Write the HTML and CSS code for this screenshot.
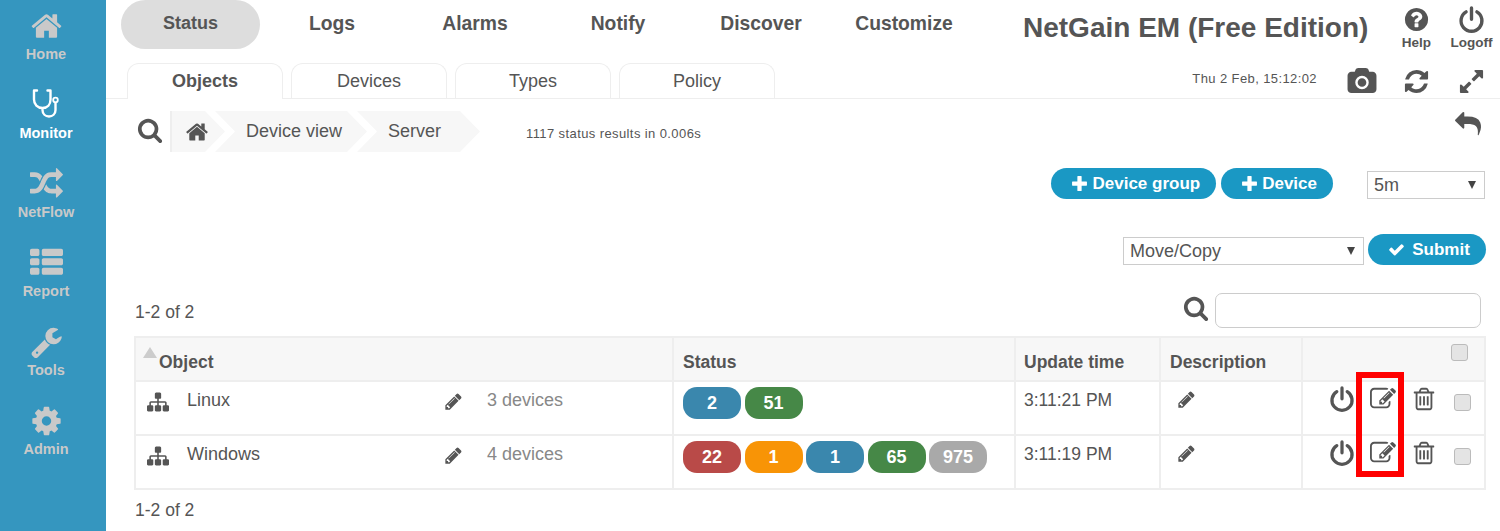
FILE: index.html
```html
<!DOCTYPE html>
<html lang="en">
<head>
    <meta charset="UTF-8">
    <meta name="viewport" content="width=device-width, initial-scale=1.0">
    <title>NetGain EM (Free Edition)</title>
    <link rel="stylesheet" href="styles.css">
</head>
<body>

<svg class="icon-defs" xmlns="http://www.w3.org/2000/svg">
    <symbol id="i-home" viewBox="0 0 1792 1792"><path d="M1472 992v480q0 26-19 45t-45 19h-384v-384h-256v384h-384q-26 0-45-19t-19-45v-480q0-1 .5-3t.5-3l575-474 575 474q1 2 1 6zm223-69l-62 74q-8 9-21 11h-3q-13 0-21-7l-692-577-692 577q-12 8-24 7-13-2-21-11l-62-74q-8-10-7-23.500t11-21.500l719-599q32-26 76-26t76 26l244 204v-195q0-14 9-23t23-9h192q14 0 23 9t9 23v408l219 182q10 8 11 21.500t-7 23.500z"/></symbol>
    <symbol id="i-search" viewBox="0 0 1792 1792"><path d="M1216 832q0-185-131.500-316.500t-316.500-131.500-316.500 131.500-131.500 316.500 131.500 316.500 316.500 131.500 316.500-131.500 131.500-316.500zm512 832q0 52-38 90t-90 38q-54 0-90-38l-343-342q-179 124-399 124-143 0-273.500-55.500t-225-150-150-225-55.500-273.500 55.500-273.500 150-225 225-150 273.500-55.500 273.500 55.500 225 150 150 225 55.500 273.500q0 220-124 399l343 343q37 37 37 90z"/></symbol>
    <symbol id="i-pencil" viewBox="0 0 1792 1792"><path d="M491 1536l91-91-235-235-91 91v107h128v128h107zm523-928q0-22-22-22-10 0-17 7l-542 542q-7 7-7 17 0 22 22 22 10 0 17-7l542-542q7-7 7-17zm-54-192l416 416-832 832h-416v-416zm683 96q0 53-37 90l-166 166-416-416 166-165q36-38 90-38 53 0 91 38l235 234q37 39 37 91z"/></symbol>
    <symbol id="i-check" viewBox="0 0 1792 1792"><path d="M1671 566q0 40-28 68l-724 724-136 136q-28 28-68 28t-68-28l-136-136-362-362q-28-28-28-68t28-68l136-136q28-28 68-28t68 28l294 295 656-657q28-28 68-28t68 28l136 136q28 28 28 68z"/></symbol>
    <symbol id="i-plus" viewBox="0 0 16 16"><path d="M6 1.500q0-.5.5-.5h3q.5 0 .5.500V6h4.500q.5 0 .5.500v3q0 .5-.5.500H10v4.500q0 .5-.5.500h-3q-.5 0-.5-.500V10H1.500q-.5 0-.5-.500v-3q0-.5.5-.500H6z"/></symbol>
    <symbol id="i-random" viewBox="0 0 1792 1792"><path d="M666 481q-60 92-137 273-22-45-37-72.500t-40.500-63.500-51-56.500-63-35-81.500-14.500h-224q-14 0-23-9t-9-23v-192q0-14 9-23t23-9h224q250 0 410 225zm1126 799q0 14-9 23l-320 320q-9 9-23 9-13 0-22.500-9.500t-9.500-22.500v-192q-32 0-85 .5t-81 1-73-1-71-5-64-10.500-63-18.500-58-28.500-59-40-55-53.500-56-69q59-93 136-273 22 45 37 72.500t40.500 63.500 51 56.500 63 35 81.500 14.500h256v-192q0-14 9-23t23-9q12 0 24 10l319 319q9 9 9 23zm0-896q0 14-9 23l-320 320q-9 9-23 9-13 0-22.500-9.500t-9.500-22.500v-192h-256q-48 0-87 15t-69 45-51 61.500-45 77.500q-32 62-78 171-29 66-49.500 111t-54 105-64 100-74 83-90 68.500-106.500 42-128 16.500h-224q-14 0-23-9t-9-23v-192q0-14 9-23t23-9h224q48 0 87-15t69-45 51-61.500 45-77.500q32-62 78-171 29-66 49.500-111t54-105 64-100 74-83 90-68.500 106.500-42 128-16.500h256v-192q0-14 9-23t23-9q12 0 24 10l319 319q9 9 9 23z"/></symbol>
    <symbol id="i-list" viewBox="0 0 1792 1792"><path d="M512 1248v192q0 40-28 68t-68 28h-320q-40 0-68-28t-28-68v-192q0-40 28-68t68-28h320q40 0 68 28t28 68zm0-512v192q0 40-28 68t-68 28h-320q-40 0-68-28t-28-68v-192q0-40 28-68t68-28h320q40 0 68 28t28 68zm1280 512v192q0 40-28 68t-68 28h-960q-40 0-68-28t-28-68v-192q0-40 28-68t68-28h960q40 0 68 28t28 68zm-1280-1024v192q0 40-28 68t-68 28h-320q-40 0-68-28t-28-68v-192q0-40 28-68t68-28h320q40 0 68 28t28 68zm1280 512v192q0 40-28 68t-68 28h-960q-40 0-68-28t-28-68v-192q0-40 28-68t68-28h960q40 0 68 28t28 68zm0-512v192q0 40-28 68t-68 28h-960q-40 0-68-28t-28-68v-192q0-40 28-68t68-28h960q40 0 68 28t28 68z"/></symbol>
    <symbol id="i-wrench" viewBox="0 0 1792 1792"><path d="M448 1472q0-26-19-45t-45-19-45 19-19 45 19 45 45 19 45-19 19-45zm644-420l-682 682q-37 37-90 37-52 0-91-37l-106-108q-38-36-38-90 0-53 38-91l681-681q39 98 114.500 173.500t173.500 114.500zm634-435q0 39-23 106-47 134-164.500 217.500t-258.500 83.500q-185 0-316.500-131.500t-131.500-316.500 131.500-316.500 316.500-131.500q58 0 121.500 16.500t107.500 46.500q16 11 16 28t-16 28l-293 169v224l193 107q5-3 79-48.500t135.500-81 70.500-35.500q15 0 23.500 10t8.500 25z"/></symbol>
    <symbol id="i-cog" viewBox="0 0 1792 1792"><path d="M1152 896q0-106-75-181t-181-75-181 75-75 181 75 181 181 75 181-75 75-181zm512-109v222q0 12-8 23t-20 13l-185 28q-19 54-39 91 35 50 107 138 10 12 10 25t-9 23q-27 37-99 108t-94 71q-12 0-26-9l-138-108q-44 23-91 38-16 136-29 186-7 28-36 28h-222q-14 0-24.500-8.500t-11.500-21.500l-28-184q-49-16-90-37l-141 107q-10 9-25 9-14 0-25-11-126-114-165-168-7-10-7-23 0-12 8-23 15-21 51-66.500t54-70.500q-27-50-41-99l-183-27q-13-2-21-12.500t-8-23.500v-222q0-12 8-23t19-13l186-28q14-46 39-92-40-57-107-138-10-12-10-24 0-10 9-23 26-36 98.500-107.500t94.500-71.500q13 0 26 10l138 107q44-23 91-38 16-136 29-186 7-28 36-28h222q14 0 24.500 8.500t11.500 21.500l28 184q49 16 90 37l142-107q9-9 24-9 13 0 25 10 129 119 165 170 7 8 7 22 0 12-8 23-15 21-51 66.500t-54 70.500q26 50 41 98l183 28q13 2 21 12.500t8 23.500z"/></symbol>
    <symbol id="i-help" viewBox="0 0 1792 1792"><path d="M1024 1376v-192q0-14-9-23t-23-9h-192q-14 0-23 9t-9 23v192q0 14 9 23t23 9h192q14 0 23-9t9-23zm256-672q0-88-55.500-163t-138.500-116-170-41q-243 0-371 213-15 24 8 42l132 100q7 6 19 6 16 0 25-12 53-68 86-92 34-24 86-24 48 0 85.500 26t37.500 59q0 38-20 61t-68 45q-63 28-115.500 86.500t-52.500 125.500v36q0 14 9 23t23 9h192q14 0 23-9t9-23q0-19 21.500-49.500t54.500-49.500q32-18 49-28.500t46-35 44.500-48 28-60.500 12.500-81zm384 192q0 209-103 385.500t-279.500 279.500-385.500 103-385.500-103-279.500-279.500-103-385.500 103-385.500 279.500-279.500 385.500-103 385.500 103 279.500 279.500 103 385.500z"/></symbol>
    <symbol id="i-camera" viewBox="0 0 1792 1792"><path d="M896 672q119 0 203.500 84.500t84.500 203.500-84.500 203.500-203.500 84.500-203.500-84.500-84.500-203.500 84.500-203.500 203.500-84.500zm704-416q106 0 181 75t75 181v896q0 106-75 181t-181 75h-1408q-106 0-181-75t-75-181v-896q0-106 75-181t181-75h224l51-136q19-49 69.500-84.500t103.500-35.500h512q53 0 103.500 35.500t69.500 84.500l51 136h224zm-704 1152q185 0 316.500-131.500t131.500-316.500-131.500-316.500-316.500-131.500-316.500 131.500-131.500 316.500 131.500 316.500 316.500 131.500z"/></symbol>
    <symbol id="i-refresh" viewBox="0 0 1792 1792"><path d="M1639 1056q0 5-1 7-64 268-268 434.500t-478 166.500q-146 0-282.500-55t-243.500-157l-129 129q-19 19-45 19t-45-19-19-45v-448q0-26 19-45t45-19h448q26 0 45 19t19 45-19 45l-137 137q71 66 161 102t187 36q134 0 250-65t186-179q11-17 53-117 8-23 30-23h192q13 0 22.500 9.500t9.500 22.500zm25-800v448q0 26-19 45t-45 19h-448q-26 0-45-19t-19-45 19-45l138-138q-148-137-349-137-134 0-250 65t-186 179q-11 17-53 117-8 23-30 23h-199q-13 0-22.500-9.500t-9.500-22.500v-7q65-268 270-434.500t480-166.500q146 0 284 55.500t245 156.500l130-129q19-19 45-19t45 19 19 45z"/></symbol>
    <symbol id="i-expand" viewBox="0 0 1792 1792"><path d="M883 1056q0 13-10 23l-332 332 144 144q19 19 19 45t-19 45-45 19h-448q-26 0-45-19t-19-45v-448q0-26 19-45t45-19 45 19l144 144 332-332q10-10 23-10t23 10l114 114q10 10 10 23zm781-864v448q0 26-19 45t-45 19-45-19l-144-144-332 332q-10 10-23 10t-23-10l-114-114q-10-10-10-23t10-23l332-332-144-144q-19-19-19-45t19-45 45-19h448q26 0 45 19t19 45z"/></symbol>
    <symbol id="i-reply" viewBox="0 0 1792 1792"><path d="M1792 1120q0 166-127 451-3 7-10.500 24t-13.500 30-13 22q-12 17-28 17-15 0-23.500-10t-8.500-25q0-9 2.500-26.500t2.500-23.500q5-68 5-123 0-101-17.500-181t-48.500-138.500-80-101-105.500-69.500-133-42.500-154-21.500-175.500-6h-224v256q0 26-19 45t-45 19-45-19l-512-512q-19-19-19-45t19-45l512-512q19-19 45-19t45 19 19 45v256h224q713 0 875 403 53 134 53 333z"/></symbol>
    <symbol id="i-sitemap" viewBox="0 0 1792 1792"><path d="M1792 1248v320q0 40-28 68t-68 28h-320q-40 0-68-28t-28-68v-320q0-40 28-68t68-28h96v-192h-512v192h96q40 0 68 28t28 68v320q0 40-28 68t-68 28h-320q-40 0-68-28t-28-68v-320q0-40 28-68t68-28h96v-192h-512v192h96q40 0 68 28t28 68v320q0 40-28 68t-68 28h-320q-40 0-68-28t-28-68v-320q0-40 28-68t68-28h96v-192q0-52 38-90t90-38h512v-192h-96q-40 0-68-28t-28-68v-320q0-40 28-68t68-28h320q40 0 68 28t28 68v320q0 40-28 68t-68 28h-96v192h512q52 0 90 38t38 90v192h96q40 0 68 28t28 68z"/></symbol>
    <symbol id="i-edit" viewBox="0 0 1792 1792"><path d="M888 1184l116-116-152-152-116 116v56h96v96h56zm440-720q-16-16-33 1l-350 350q-17 17-1 33t33-1l350-350q17-17 1-33zm80 594v190q0 119-84.500 203.500t-203.500 84.500h-832q-119 0-203.500-84.500t-84.500-203.500v-832q0-119 84.500-203.500t203.500-84.500h832q63 0 117 25 15 7 18 23 3 17-9 29l-49 49q-14 14-32 8-23-6-45-6h-832q-66 0-113 47t-47 113v832q0 66 47 113t113 47h832q66 0 113-47t47-113v-126q0-13 9-22l64-64q15-15 35-7t20 29zm-96-738l288 288-672 672h-288v-288zm444 132l-92 92-288-288 92-92q28-28 68-28t68 28l152 152q28 28 28 68t-28 68z"/></symbol>
    <symbol id="i-trash" viewBox="0 0 1792 1792"><path d="M704 736v576q0 14-9 23t-23 9h-64q-14 0-23-9t-9-23v-576q0-14 9-23t23-9h64q14 0 23 9t9 23zm256 0v576q0 14-9 23t-23 9h-64q-14 0-23-9t-9-23v-576q0-14 9-23t23-9h64q14 0 23 9t9 23zm256 0v576q0 14-9 23t-23 9h-64q-14 0-23-9t-9-23v-576q0-14 9-23t23-9h64q14 0 23 9t9 23zm128 724v-948h-896v948q0 22 7 40.500t14.500 27 10.500 8.500h832q3 0 10.500-8.500t14.500-27 7-40.500zm-672-1076h448l-48-117q-7-9-17-11h-317q-10 2-17 11zm928 32v64q0 14-9 23t-23 9h-96v948q0 83-47 143.500t-113 60.500h-832q-66 0-113-58.500t-47-141.500v-952h-96q-14 0-23-9t-9-23v-64q0-14 9-23t23-9h309l70-167q15-37 54-63t79-26h320q40 0 79 26t54 63l70 167h309q14 0 23 9t9 23z"/></symbol>
    <symbol id="i-power" viewBox="0 0 24 24"><path d="M7.200 5.200a9.300 9.300 0 1 0 9.600 0M12 1.800v10" fill="none" stroke="currentColor" stroke-width="3" stroke-linecap="round"/></symbol>
    <symbol id="i-steth" viewBox="0 0 33 36"><path d="M7 3.500H4v9c0 5 3.500 8.500 8.500 8.500s8-3.500 8-8.500v-9h-3M12.500 21v2c0 4 3 6.500 6.500 6.500s6.500-2.500 6.500-6.500v-7" fill="none" stroke="currentColor" stroke-width="2.400" stroke-linecap="round" stroke-linejoin="round"/><circle cx="25.500" cy="13" r="2.300" fill="none" stroke="currentColor" stroke-width="1.800"/></symbol>
</svg>

<div class="app">
    <nav class="sidebar">
        <a class="side-item"><svg class="side-icon"><use href="#i-home"/></svg>Home</a>
        <a class="side-item active"><svg class="side-icon"><use href="#i-steth"/></svg>Monitor</a>
        <a class="side-item"><svg class="side-icon"><use href="#i-random"/></svg>NetFlow</a>
        <a class="side-item"><svg class="side-icon"><use href="#i-list"/></svg>Report</a>
        <a class="side-item"><svg class="side-icon"><use href="#i-wrench"/></svg>Tools</a>
        <a class="side-item"><svg class="side-icon"><use href="#i-cog"/></svg>Admin</a>
    </nav>

    <div class="main">
        <header class="topbar">
            <div class="menu">
                <a class="menu-item selected">Status</a>
                <a class="menu-item">Logs</a>
                <a class="menu-item">Alarms</a>
                <a class="menu-item">Notify</a>
                <a class="menu-item">Discover</a>
                <a class="menu-item">Customize</a>
            </div>
            <h1 class="app-title">NetGain EM (Free Edition)</h1>
            <a class="top-link"><svg class="top-icon"><use href="#i-help"/></svg>Help</a>
            <a class="top-link"><svg class="top-icon"><use href="#i-power"/></svg>Logoff</a>
        </header>

        <div class="tabbar">
            <a class="tab selected">Objects</a>
            <a class="tab">Devices</a>
            <a class="tab">Types</a>
            <a class="tab">Policy</a>
            <span class="clock">Thu 2 Feb, 15:12:02</span>
            <span class="tool"><svg class="tool-icon camera"><use href="#i-camera"/></svg></span>
            <span class="tool"><svg class="tool-icon"><use href="#i-refresh"/></svg></span>
            <span class="tool"><svg class="tool-icon"><use href="#i-expand"/></svg></span>
        </div>

        <div class="content">
            <div class="crumb-row">
                <svg class="search-icon crumb-search"><use href="#i-search"/></svg>
                <div class="crumbs">
                    <a class="crumb crumb-home"><svg class="crumb-icon"><use href="#i-home"/></svg></a>
                    <a class="crumb crumb-view">Device view</a>
                    <a class="crumb crumb-server">Server</a>
                </div>
                <span class="result-info">1117 status results in 0.006s</span>
                <svg class="back-icon"><use href="#i-reply"/></svg>
            </div>

            <div class="action-row">
                <a class="button"><svg class="btn-icon"><use href="#i-plus"/></svg>Device group</a>
                <a class="button"><svg class="btn-icon"><use href="#i-plus"/></svg>Device</a>
                <div class="select-box select-time">
                    <select><option>5m</option></select>
                </div>
            </div>

            <div class="bulk-row">
                <div class="select-box select-bulk">
                    <select><option>Move/Copy</option></select>
                </div>
                <a class="button button-submit"><svg class="btn-icon"><use href="#i-check"/></svg>Submit</a>
            </div>

            <div class="filter-row">
                <span class="pager">1-2 of 2</span>
                <svg class="search-icon filter-search"><use href="#i-search"/></svg>
                <input class="filter-input" type="text">
            </div>

            <table class="status-table">
                <colgroup>
                    <col class="col-object">
                    <col class="col-status">
                    <col class="col-time">
                    <col class="col-desc">
                    <col class="col-actions">
                </colgroup>
                <thead>
                    <tr>
                        <th><div class="sort-head"><span class="sort-arrow"></span>Object</div></th>
                        <th>Status</th>
                        <th class="time-cell">Update time</th>
                        <th>Description</th>
                        <th class="head-check"><input class="check" type="checkbox"></th>
                    </tr>
                </thead>
                <tbody>
                    <tr>
                        <td>
                            <div class="object-cell">
                                <svg class="tree-icon"><use href="#i-sitemap"/></svg>
                                <span>Linux</span>
                                <svg class="pencil-icon"><use href="#i-pencil"/></svg>
                                <span class="device-count">3 devices</span>
                            </div>
                        </td>
                        <td>
                            <div class="badges">
                                <span class="badge blue">2</span>
                                <span class="badge green">51</span>
                            </div>
                        </td>
                        <td class="time-cell">3:11:21 PM</td>
                        <td><svg class="pencil-icon desc-pencil"><use href="#i-pencil"/></svg></td>
                        <td>
                            <div class="row-actions">
                                <svg class="act-icon"><use href="#i-power"/></svg>
                                <svg class="act-icon"><use href="#i-edit"/></svg>
                                <svg class="act-icon"><use href="#i-trash"/></svg>
                                <input class="check" type="checkbox">
                            </div>
                        </td>
                    </tr>
                    <tr>
                        <td>
                            <div class="object-cell">
                                <svg class="tree-icon"><use href="#i-sitemap"/></svg>
                                <span>Windows</span>
                                <svg class="pencil-icon"><use href="#i-pencil"/></svg>
                                <span class="device-count">4 devices</span>
                            </div>
                        </td>
                        <td>
                            <div class="badges">
                                <span class="badge red">22</span>
                                <span class="badge orange">1</span>
                                <span class="badge blue">1</span>
                                <span class="badge green">65</span>
                                <span class="badge grey">975</span>
                            </div>
                        </td>
                        <td class="time-cell">3:11:19 PM</td>
                        <td><svg class="pencil-icon desc-pencil"><use href="#i-pencil"/></svg></td>
                        <td>
                            <div class="row-actions">
                                <svg class="act-icon"><use href="#i-power"/></svg>
                                <svg class="act-icon"><use href="#i-edit"/></svg>
                                <svg class="act-icon"><use href="#i-trash"/></svg>
                                <input class="check" type="checkbox">
                            </div>
                        </td>
                    </tr>
                </tbody>
            </table>

            <div class="pager pager-bottom">1-2 of 2</div>
        </div>

        <div class="highlight-box"></div>
    </div>
</div>

</body>
</html>
```

FILE: styles.css
```css
* {
    box-sizing: border-box;
}
html, body {
    margin: 0;
    padding: 0;
    height: 531px;
    overflow: hidden;
}
body {
    font-family: "Liberation Sans", Arial, sans-serif;
    color: #555;
    background-color: white;
}
svg {
    fill: currentColor;
}
.icon-defs {
    display: none;
}
.app {
    display: flex;
    height: 531px;
}

/* left menu */
.sidebar {
    width: 106px;
    flex-shrink: 0;
    padding: 8px 14px 0 0;
    background-color: #3596bf;
}
.side-item {
    display: flex;
    flex-direction: column;
    align-items: center;
    height: 79px;
    font-size: 14.5px;
    font-weight: bold;
    line-height: 18px;
    color: #c9c9c9;
}
.side-item.active {
    color: white;
}
.side-icon {
    width: 33px;
    height: 36px;
    margin-bottom: 1px;
}

/* top bar */
.main {
    position: relative;
    flex: 1;
    min-width: 0;
}
.topbar {
    display: flex;
    align-items: flex-start;
    height: 50px;
    padding-left: 15px;
}
.menu {
    display: flex;
    width: 902px;
}
.menu-item {
    width: 143px;
    height: 49px;
    font-size: 19.3px;
    font-weight: bold;
    line-height: 47px;
    text-align: center;
    color: #555;
}
.menu-item.selected {
    width: 139px;
    margin-right: 0.5px;
    font-size: 18px;
    background-color: #ddd;
    border-radius: 25px;
}
.app-title {
    width: 366px;
    margin: 13px 0 0 0;
    font-size: 28px;
    line-height: 30px;
    color: #555;
    white-space: nowrap;
}
.top-link {
    display: flex;
    flex-direction: column;
    align-items: center;
    width: 55px;
    font-size: 13.5px;
    font-weight: bold;
    line-height: 15px;
    padding-top: 6px;
}
.top-icon {
    width: 27px;
    height: 27px;
    margin-bottom: 2px;
}

/* tabs */
.tabbar {
    display: flex;
    align-items: flex-end;
    height: 49px;
    padding: 0 1px 0 21px;
    border-bottom: 1px solid #eee;
}
.tab {
    width: 156px;
    height: 35px;
    margin-right: 8px;
    font-size: 18px;
    line-height: 34px;
    text-align: center;
    border: 1px solid #eee;
    border-bottom: none;
    border-radius: 12px 12px 0 0;
}
.tab.selected {
    height: 36px;
    margin-bottom: -1px;
    font-weight: bold;
    background-color: white;
}
.clock {
    margin-left: auto;
    margin-right: 17px;
    align-self: center;
    padding-top: 9px;
    font-size: 13px;
    letter-spacing: 0.4px;
}
.tool {
    display: flex;
    justify-content: center;
    align-self: center;
    width: 55px;
    padding-top: 14px;
}
.tool-icon {
    width: 27px;
    height: 27px;
}
.tool-icon.camera {
    width: 30px;
    margin-left: 1px;
}

/* page body */
.content {
    padding: 12px 15px 0 29px;
}
.crumb-row {
    display: flex;
    align-items: center;
    height: 41px;
}
.search-icon {
    width: 26px;
    height: 26px;
    flex-shrink: 0;
}
.crumb-search {
    margin: -3px 0 0 2px;
}
.crumbs {
    display: flex;
    width: 310px;
    height: 41px;
    margin-left: 7px;
}
.crumb {
    display: flex;
    align-items: center;
    height: 41px;
    font-size: 18px;
    background-color: #f7f7f7;
    clip-path: polygon(0 0, calc(100% - 20px) 0, 100% 50%, calc(100% - 20px) 100%, 0 100%, 20px 50%);
}
.crumb-home {
    width: 55px;
    padding-left: 13px;
    border-left: 2px solid #eee;
    clip-path: polygon(0 0, calc(100% - 20px) 0, 100% 50%, calc(100% - 20px) 100%, 0 100%);
}
.crumb-view {
    width: 152px;
    margin-left: -10px;
    padding-left: 31px;
}
.crumb-server {
    width: 123px;
    margin-left: -10px;
    padding-left: 31px;
}
.crumb-icon {
    width: 24px;
    height: 24px;
}
.result-info {
    margin-left: 46px;
    padding-top: 3px;
    font-size: 13px;
    letter-spacing: 0.4px;
}
.back-icon {
    width: 26px;
    height: 26px;
    margin-left: auto;
    margin-right: 4px;
    margin-top: -16px;
}
.action-row {
    display: flex;
    justify-content: flex-end;
    align-items: center;
    gap: 5px;
    margin-top: 16px;
}
.button {
    display: flex;
    align-items: center;
    justify-content: center;
    height: 31px;
    padding: 0 16px 0 20px;
    font-size: 17px;
    font-weight: bold;
    color: white;
    background-color: #1a98c4;
    border-radius: 16px;
}
.btn-icon {
    width: 17px;
    height: 17px;
    margin-right: 4px;
}
.select-box {
    position: relative;
    height: 28px;
    margin-top: 2px;
}
.select-box::after {
    content: "";
    position: absolute;
    right: 9px;
    top: 10px;
    border-left: 4.500px solid transparent;
    border-right: 4.500px solid transparent;
    border-top: 8px solid #444;
}
.select-box select {
    width: 100%;
    height: 100%;
    padding: 0 6px;
    font-family: inherit;
    font-size: 18px;
    color: #555;
    background-color: white;
    border: 1px solid #ccc;
    border-radius: 0;
    appearance: none;
}
.select-time {
    width: 118px;
    margin-left: 29px;
}
.select-bulk {
    width: 241px;
}
.bulk-row {
    display: flex;
    justify-content: flex-end;
    align-items: center;
    gap: 4px;
    margin: 35px -1px 0 0;
}
.button-submit {
    width: 118px;
    padding: 0 0 0 4px;
}
.button-submit .btn-icon {
    margin-right: 7px;
}
.filter-row {
    display: flex;
    align-items: center;
    margin-top: 28px;
    padding-right: 4px;
}
.pager {
    font-size: 17.5px;
}
.filter-row .pager {
    margin-right: auto;
    padding-top: 3px;
}
.filter-search {
    margin-top: -6px;
}
.filter-input {
    width: 266px;
    height: 35px;
    margin-left: 6px;
    border: 1px solid #ccc;
    border-radius: 7px;
}

/* table */
.status-table {
    width: 1350px;
    margin: 8px 0 0 -1px;
    border-collapse: collapse;
    table-layout: fixed;
    font-size: 17.5px;
}
.col-object {
    width: 538px;
}
.col-status {
    width: 342px;
}
.col-time {
    width: 145px;
}
.col-desc {
    width: 142px;
}
.col-actions {
    width: 183px;
}
.status-table th, .status-table td {
    padding: 0 9px;
    border: 2px solid #eee;
}
.status-table th {
    height: 44px;
    text-align: left;
    padding-top: 6px;
    background-color: #f7f7f7;
}
.status-table td {
    height: 54px;
    padding-top: 5px;
    vertical-align: top;
    line-height: 26px;
}
.status-table .time-cell {
    padding-left: 8px;
}
.sort-head {
    display: flex;
    align-items: center;
}
.sort-arrow {
    width: 0;
    height: 0;
    margin: -20px 2px 0 -2px;
    border-left: 7px solid transparent;
    border-right: 7px solid transparent;
    border-bottom: 11px solid #ccc;
}
.status-table .head-check {
    padding-left: 148px;
}
.check {
    display: block;
    width: 17px;
    height: 17px;
    margin: -18px 0 0 0;
    background-color: #e4e4e4;
    border: 1px solid #bbb;
    border-radius: 3px;
    appearance: none;
}
.object-cell {
    display: grid;
    grid-template-columns: 40px 257px 43px auto;
    align-items: center;
    padding-left: 2px;
    font-size: 18px;
}
.tree-icon {
    width: 22px;
    height: 22px;
    margin-top: 3px;
}
.pencil-icon {
    width: 19px;
    height: 19px;
}
.object-cell .pencil-icon {
    margin-top: 3px;
}
.desc-pencil {
    display: block;
    margin-top: 3px;
    margin-left: 7px;
}
.device-count {
    color: #888;
}
.badges {
    display: flex;
    gap: 3.5px;
}
.badge {
    width: 58px;
    height: 32px;
    font-size: 18px;
    font-weight: bold;
    line-height: 32px;
    text-align: center;
    color: white;
    border-radius: 14px;
}
.blue {
    background-color: #3a87ad;
}
.green {
    background-color: #468847;
}
.red {
    background-color: #b94a48;
}
.orange {
    background-color: #f89406;
}
.grey {
    background-color: #a9a9a9;
}
.row-actions {
    display: flex;
    align-items: center;
    gap: 15px;
    padding-left: 17px;
    margin-top: -1px;
}
.act-icon {
    width: 26px;
    height: 26px;
}
.row-actions .check {
    margin: 6px 0 0 2px;
}
.pager-bottom {
    margin-top: 10px;
}

/* red annotation drawn on top of the screenshot */
.highlight-box {
    position: absolute;
    left: 1250px;
    top: 372px;
    width: 48px;
    height: 105px;
    border: 6px solid #f00;
}
```
